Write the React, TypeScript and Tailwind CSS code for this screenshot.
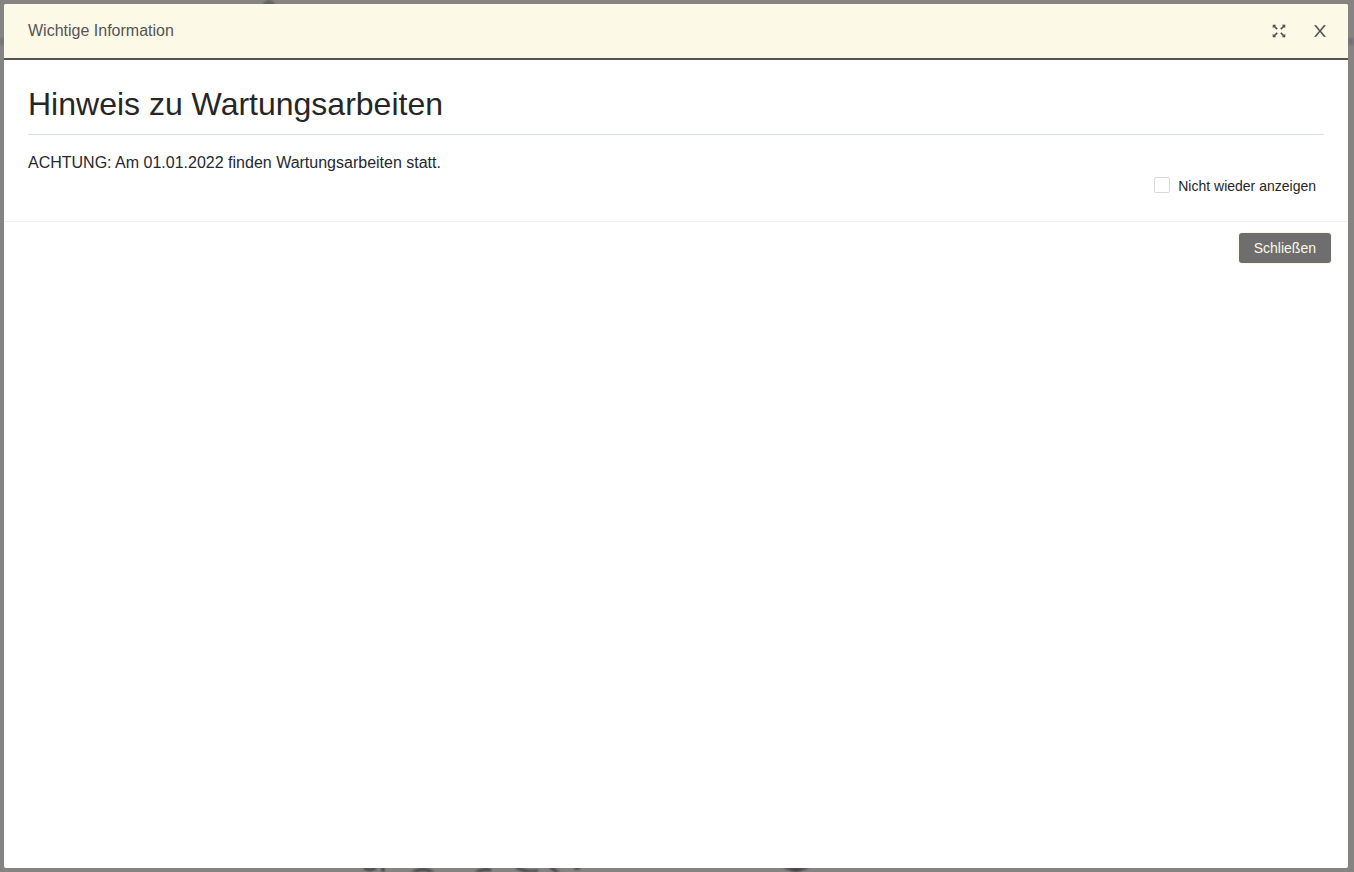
import { useState } from 'react';

function Backdrop() {
  return (
    <svg className="absolute inset-0 h-full w-full blur-[1px]" aria-hidden="true">
      <g fill="none" stroke="#454345" strokeWidth="4">
        <circle cx="269" cy="6" r="4" fill="#626163" stroke="#626163" />
        <path d="M364 868 l6 2 l6 -2 M383 866 v8" strokeWidth="3" />
        <path d="M411 874 q12 -9 24 0" strokeWidth="3" />
        <path d="M474 874 q8 -6 17 -4" strokeWidth="3" />
        <path d="M516 867 q10 6 22 4 M550 867 l9 6 M574 868 h6" strokeWidth="3" />
        <path d="M784 868 h24 l-12 4 z" fill="#454345" strokeWidth="1" />
      </g>
      <g fill="#737174">
        <rect x="0" y="38" width="4" height="7" />
        <rect x="1348" y="38" width="6" height="7" />
      </g>
    </svg>
  );
}

function ExpandIcon() {
  return (
    <svg width="14" height="14" viewBox="0 0 14 14" fill="#515151" stroke="#515151" aria-hidden="true">
      <path d="M2 2 L5.200 5.200 M12 2 L8.800 5.200 M2 12 L5.200 8.800 M12 12 L8.800 8.800" strokeWidth="1.7" />
      <path d="M1 1 H3.600 L1 3.600 Z M13 1 H10.400 L13 3.600 Z M1 13 V10.400 L3.600 13 Z M13 13 V10.400 L10.400 13 Z" strokeWidth=".6" />
    </svg>
  );
}

function CloseIcon() {
  return (
    <svg width="16" height="16" viewBox="64 64 896 896" fill="#515151" stroke="#515151" strokeWidth="12" aria-hidden="true">
      <path d="M563.8 512l262.5-312.9c4.4-5.2.7-13.1-6.1-13.1h-79.8c-4.7 0-9.2 2.1-12.3 5.7L511.6 449.8 295.1 191.7c-3-3.6-7.5-5.7-12.3-5.7H203c-6.8 0-10.5 7.9-6.1 13.1L459.4 512 196.9 824.9A7.95 7.95 0 0 0 203 838h79.8c4.7 0 9.2-2.1 12.3-5.7l216.500-258.100 216.500 258.100c3 3.6 7.5 5.7 12.3 5.7h79.800c6.800 0 10.500-7.900 6.100-13.100L563.800 512z" />
    </svg>
  );
}

export default function App() {
  const [hidden, setHidden] = useState(false);

  return (
    <div className="relative flex min-h-screen overflow-hidden bg-[#858483] py-1 pl-1 pr-1.5 font-['Liberation_Sans',Arial,sans-serif]">
      <Backdrop />
      <div
        role="dialog"
        aria-labelledby="dialog-title"
        className="relative flex flex-1 flex-col overflow-hidden rounded-xs bg-white"
      >
        <header className="flex h-14 items-center justify-between border-b-2 border-[#555] bg-[#fcf9e6] pl-6 pr-5">
          <h2 id="dialog-title" className="text-base text-[#555]">Wichtige Information</h2>
          <div className="flex items-center gap-6">
            <button type="button" aria-label="Vollbild" className="p-0.5">
              <ExpandIcon />
            </button>
            <button type="button" aria-label="Dialog schließen">
              <CloseIcon />
            </button>
          </div>
        </header>

        <main className="border-b border-[#f0f0f0] px-6 pt-6 pb-6">
          <h1 className="border-b border-[#d8dee4] pb-2.5 text-[32px] leading-10 text-[#262626]">
            Hinweis zu Wartungsarbeiten
          </h1>
          <p className="mt-4 text-base text-[#24292f]">
            ACHTUNG: Am 01.01.2022 finden Wartungsarbeiten statt.
          </p>
          <div className="flex justify-end pr-2">
            <label className="flex items-start gap-2 text-sm leading-[22px] text-[#262626]">
              <input
                type="checkbox"
                checked={hidden}
                onChange={(e) => setHidden(e.target.checked)}
                className="mt-0.5 size-4 appearance-none rounded-xs border border-[#d9d9d9] bg-white checked:bg-[#6e6e6e]"
              />
              Nicht wieder anzeigen
            </label>
          </div>
        </main>

        <footer className="flex justify-end pt-[11px] pr-[17px]">
          <button
            type="button"
            className="h-[30px] rounded-[3px] bg-[#6e6e6e] px-[15px] text-sm text-[#fcf9e6] shadow-[0_0_0_1px_#fcf9e6]"
          >
            Schließen
          </button>
        </footer>
      </div>
    </div>
  );
}
